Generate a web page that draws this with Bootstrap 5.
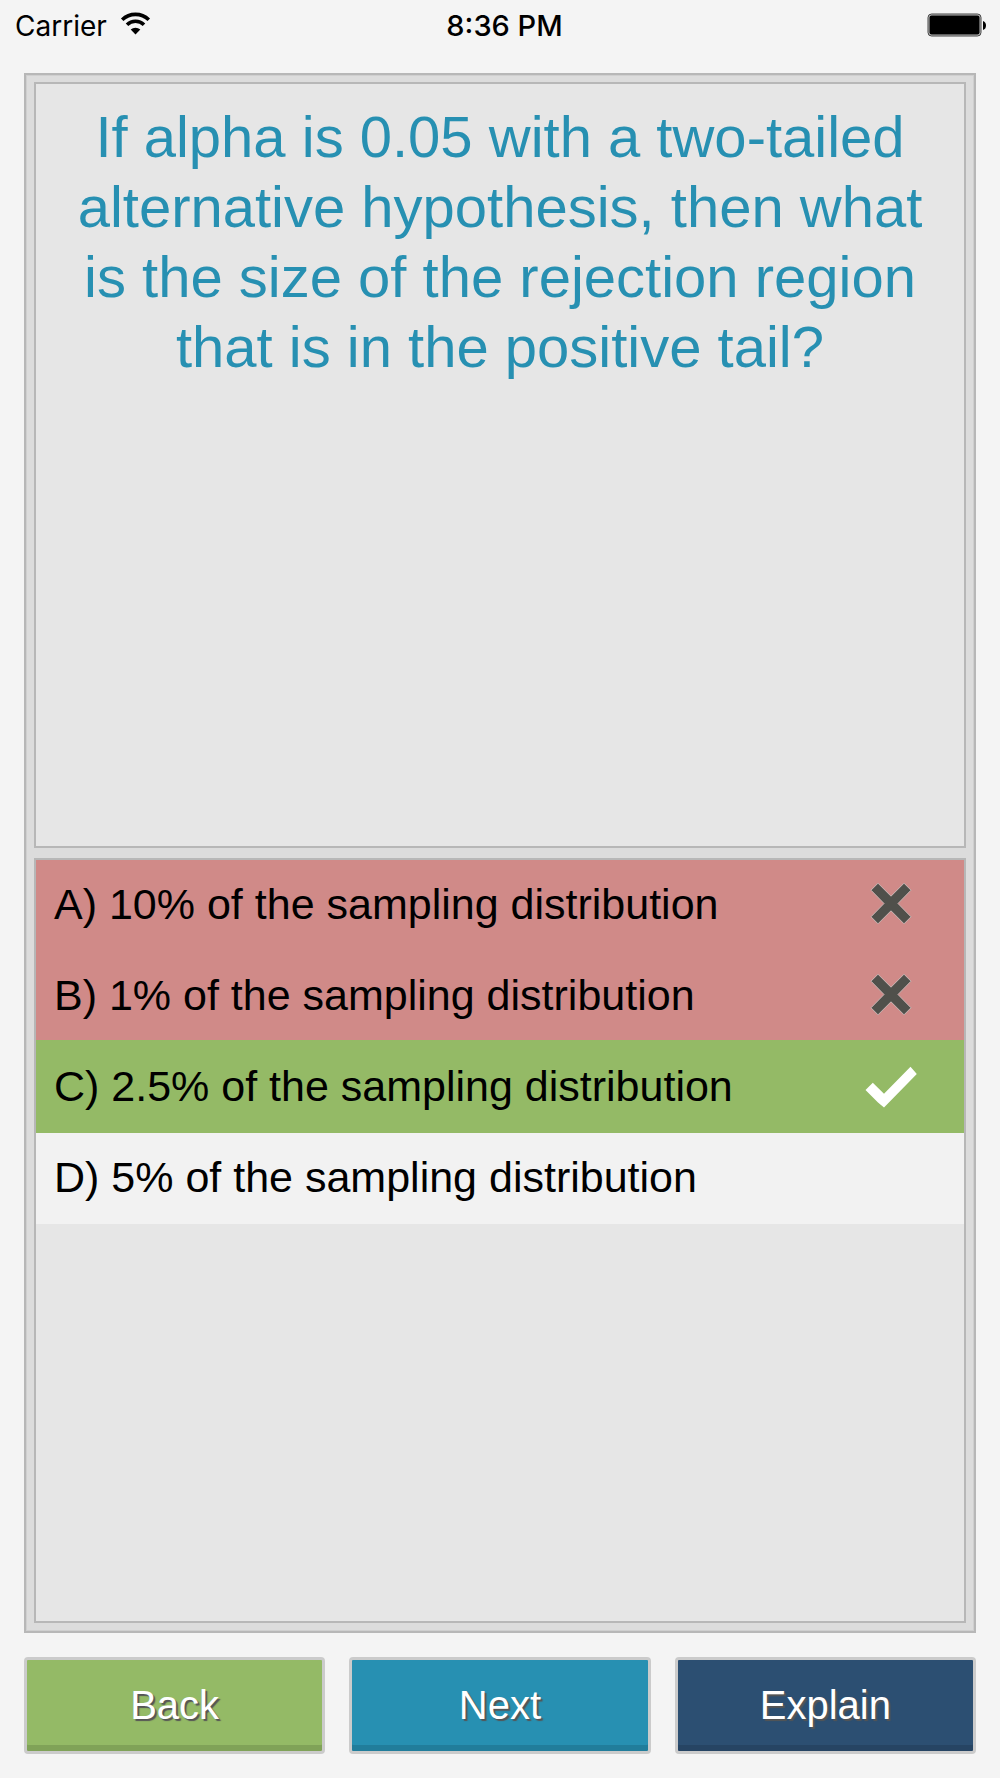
<!DOCTYPE html>
<html lang="en">
<head>
<meta charset="utf-8">
<meta name="viewport" content="width=device-width, initial-scale=1">
<title>Quiz</title>
<link href="https://cdn.jsdelivr.net/npm/bootstrap@5.3.0/dist/css/bootstrap.min.css" rel="stylesheet">
<style>
  body { background: #f4f4f4; color: #000; font-family: "Liberation Sans", Arial, sans-serif; }
  .status-bar { height: 73px; padding: 10px 14px 0 15px; font-family: Inter, sans-serif; font-size: 28px; line-height: 32px; }
  .status-bar .side { flex: 1 1 0; gap: 10px; }
  .status-time { font-size: 29px; font-weight: 500; }
  .quiz-frame { margin: 0 24px; padding: 7px 8px 8px; gap: 10px; background: #dcdcdc; border: 2px solid #b7b7b7; box-shadow: inset 0 0 0 1px #cfcfcf; }
  .quiz-pane { flex: 1 1 0; background: #e6e6e6; border: 2px solid #b7b7b7; }
  .question { padding: 18px 32px; font-size: 58px; line-height: 70px; color: #2790b2; }
  .answer { height: 91px; padding: 0 47px 3px 18px; border: 0; background: #f2f2f2; color: #000; font-size: 43px; line-height: 52px; text-align: left; }
  .answer-wrong { background: #d08a88; }
  .answer-right { background: #94ba66; box-shadow: 0 -2px 0 #94ba66; }
  .actions { padding: 24px; gap: 24px; }
  .action-btn { flex: 1 1 0; height: 97px; padding: 0 0 2px; border: 3px solid #cbcbcb; border-radius: 4px; color: #fff; font-size: 40px; line-height: 48px; text-shadow: 2px 2px 1px #555; box-shadow: inset 0 -6px 0 rgba(0, 0, 0, .13); }
  .action-btn:hover { color: #fff; border-color: #bbb; }
  .action-back, .action-back:hover { background: #94ba66; }
  .action-next, .action-next:hover { background: #2790b2; }
  .action-explain, .action-explain:hover { background: #2c4f72; }
</style>
<script src="https://cdn.jsdelivr.net/npm/bootstrap@5.3.0/dist/js/bootstrap.bundle.min.js"></script>
</head>
<body class="d-flex flex-column min-vh-100">
  <header class="status-bar d-flex align-items-start">
    <div class="side d-flex">
      <span>Carrier</span>
      <svg width="36" height="32" viewBox="0 0 36 32" aria-label="Wi-Fi">
        <g fill="none" stroke="#000" stroke-width="3.6">
          <path d="M5.200 9.800a19 19 0 0 1 26.600 0"/>
          <path d="M10 14.700a12.200 12.200 0 0 1 17 0"/>
        </g>
        <path d="M18.500 24.500l-4.800-4.900a7 7 0 0 1 9.600 0z"/>
      </svg>
    </div>
    <span class="status-time ms-2">8:36 PM</span>
    <div class="side d-flex justify-content-end">
      <svg width="60" height="32" viewBox="0 0 60 32" aria-label="Battery full">
        <rect x="2" y="4" width="53" height="22" rx="3.500" fill="#bbb" stroke="#444" stroke-width="1"/>
        <rect x="3.500" y="5.500" width="50" height="19" rx="2"/>
        <path d="M57 11q3 1 3 4.500t-3 4.500z"/>
      </svg>
    </div>
  </header>

  <main class="quiz-frame d-flex flex-column flex-grow-1">
    <section class="quiz-pane">
      <h1 class="question text-center fw-normal m-0">If alpha is 0.05 with a two-tailed alternative hypothesis, then what is the size of the rejection region that is in the positive tail?</h1>
    </section>
    <section class="quiz-pane d-flex flex-column" aria-label="Answers">
      <button type="button" class="answer answer-wrong d-flex align-items-center justify-content-between">
        <span>A) 10% of the sampling distribution</span>
        <svg width="52" height="44" viewBox="0 0 52 44" aria-label="Wrong"><path d="M13 1.200L26 14.200 39 1.200 46 8.200 33 21.500 46 34.800 39 41.800 26 28.800 13 41.800 6 34.800 19 21.500 6 8.200z" fill="#50504b" stroke="#c9b5b4" stroke-width="1"/></svg>
      </button>
      <button type="button" class="answer answer-wrong d-flex align-items-center justify-content-between">
        <span>B) 1% of the sampling distribution</span>
        <svg width="52" height="44" viewBox="0 0 52 44" aria-label="Wrong"><path d="M13 1.200L26 14.200 39 1.200 46 8.200 33 21.500 46 34.800 39 41.800 26 28.800 13 41.800 6 34.800 19 21.500 6 8.200z" fill="#50504b" stroke="#c9b5b4" stroke-width="1"/></svg>
      </button>
      <button type="button" class="answer answer-right d-flex align-items-center justify-content-between">
        <span>C) 2.5% of the sampling distribution</span>
        <svg width="52" height="44" viewBox="0 0 52 44" aria-label="Correct"><path d="M45.500 2.800L51.800 10 19 43.600 13 38.600 .5 26.100 7.800 18.800 19 29.800z" fill="#fff"/></svg>
      </button>
      <button type="button" class="answer d-flex align-items-center">
        <span>D) 5% of the sampling distribution</span>
      </button>
    </section>
  </main>

  <footer class="actions d-flex">
    <button type="button" class="btn action-btn action-back">Back</button>
    <button type="button" class="btn action-btn action-next">Next</button>
    <button type="button" class="btn action-btn action-explain">Explain</button>
  </footer>
</body>
</html>
